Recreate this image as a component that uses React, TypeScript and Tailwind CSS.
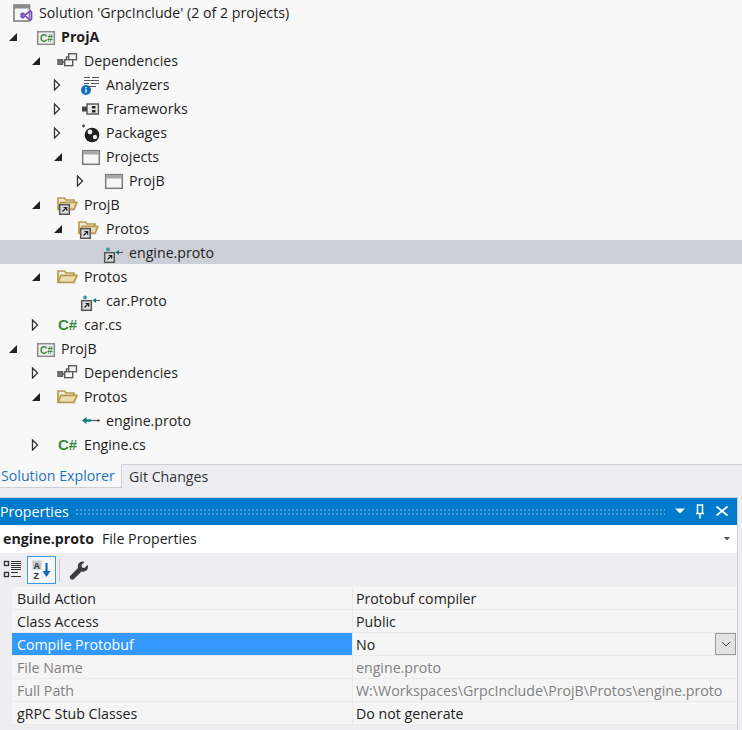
import React from 'react'

const font = { fontFamily: '"Open Sans", sans-serif' }

function Arrow({ open }: { open: boolean }) {
  return open ? (
    <svg width="10" height="10" viewBox="0 0 10 10" className="mt-px"><path d="M9 1v8H1z" fill="#222" /></svg>
  ) : (
    <svg width="8" height="12" viewBox="0 0 8 12" className="mt-px"><path d="M1.500 1l5 5-5 5z" fill="#fff" stroke="#333" strokeWidth="1.300" /></svg>
  )
}

function CsText({ x, y, size }: { x: number; y: number; size: number }) {
  return (
    <text x={x} y={y} fontSize={size} fontWeight="700" fill="#3a8a3e" fontFamily="Liberation Sans, sans-serif">C#</text>
  )
}

const SolutionIcon = () => (
  <svg width="24" height="24" viewBox="0 0 24 24">
    <rect x="1" y="5" width="15.500" height="16" fill="#f6f6f6" stroke="#808080" strokeWidth="1.600" />
    <rect x="1" y="5" width="15.500" height="3.500" fill="#8a8a8a" />
    <path d="M8 14.500l1.800-1.400 2.400 2 5-4.100 1.300.8v7.400l-1.300.8-5-4.100-2.400 2-1.800-1.400 1.800-1z" fill="none" stroke="#7a4bbd" strokeWidth="1.700" strokeLinejoin="round" />
  </svg>
)

const ProjectIcon = () => (
  <svg width="24" height="24" viewBox="0 0 24 24">
    <rect x="3.700" y="7.700" width="16.600" height="12.600" fill="#f0f0f0" stroke="#8c8c8c" strokeWidth="1.500" />
    <CsText x={6} y={18} size={10} />
  </svg>
)

const CsFileIcon = () => (
  <svg width="24" height="24" viewBox="0 0 24 24">
    <CsText x={1} y={18} size={15} />
  </svg>
)

const DependenciesIcon = () => (
  <svg width="24" height="24" viewBox="0 0 24 24" fill="none" stroke="#5c5c5c" strokeWidth="1.400">
    <rect x="11.700" y="5.700" width="7.800" height="6" fill="#f4f4f4" />
    <rect x="7.700" y="11.700" width="8" height="6" fill="#f4f4f4" />
    <rect x="1" y="11.700" width="4.500" height="4.600" fill="#777" />
    <path d="M5.500 14h2M11.700 9H9.500v2.700" />
  </svg>
)

const AnalyzersIcon = () => (
  <svg width="24" height="24" viewBox="0 0 24 24">
    <path d="M5 5.500h6M13 5.500h7M5 8.500h15M5 11.500h5M12 11.500h8M10 14.500h7" stroke="#555" strokeWidth="1.100" />
    <circle cx="7" cy="18" r="5" fill="#0e70c0" />
    <rect x="6.300" y="17" width="1.400" height="3.600" fill="#fff" />
    <rect x="6.300" y="15" width="1.400" height="1.300" fill="#fff" />
  </svg>
)

const FrameworksIcon = () => (
  <svg width="24" height="24" viewBox="0 0 24 24">
    <rect x="8" y="8" width="11.400" height="10" fill="#e8e8e8" stroke="#555" strokeWidth="1.400" />
    <path d="M3 10.500h5v5H3z" fill="#444" />
    <rect x="13" y="10" width="3.500" height="2.500" fill="#222" />
    <rect x="13" y="14" width="3.500" height="2.500" fill="#222" />
  </svg>
)

const PackagesIcon = () => (
  <svg width="24" height="24" viewBox="0 0 24 24">
    <circle cx="4.500" cy="6" r="1.400" fill="#444" />
    <circle cx="13" cy="15" r="7.300" fill="#1f1f1f" />
    <circle cx="11" cy="12" r="2.400" fill="#eee" />
    <circle cx="16" cy="17" r="2.200" fill="#eee" />
  </svg>
)

const WindowIcon = () => (
  <svg width="24" height="24" viewBox="0 0 24 24">
    <rect x="3.700" y="6.700" width="16.600" height="13.600" fill="#f7f7f7" stroke="#7c7c7c" strokeWidth="1.500" />
    <rect x="4" y="7" width="16" height="3.500" fill="#a8a8a8" />
  </svg>
)

const LinkBadge = () => (
  <>
    <rect x="2.700" y="12.700" width="9.600" height="9.600" fill="#dcdcdc" stroke="#555" strokeWidth="1.500" />
    <path d="M5.500 19.500l4-4M6.500 15.500h3.200v3.200" fill="none" stroke="#222" strokeWidth="1.200" />
  </>
)

const FolderIcon = ({ link, top = 6, className }: { link?: boolean; top?: number; className?: string }) => (
  <svg width="24" height="24" viewBox="0 0 24 24" className={className}>
    <g transform={`translate(0 ${top - 6})`}>
      <path d="M1 18.400V7h6.500l1.500 2h8v3" fill="#f3ead2" stroke="#b8994f" strokeWidth="1.700" />
      <path d="M1 18.400l3-7h16l-3 7z" fill="#ecdcae" stroke="#b8994f" strokeWidth="1.700" strokeLinejoin="round" />
    </g>
    {link && <LinkBadge />}
  </svg>
)

const ProtoLinkIcon = ({ className }: { className?: string }) => (
  <svg width="24" height="24" viewBox="0 0 24 24" className={className}>
    <circle cx="6" cy="9.500" r="1.900" fill="#3f9a9a" />
    <path d="M14 12.500h7" stroke="#555" strokeWidth="1.100" />
    <path d="M13.500 12.500l3.500-2.500v5z" fill="#137a7f" />
    <LinkBadge />
  </svg>
)

const ProtoIcon = () => (
  <svg width="24" height="24" viewBox="0 0 24 24">
    <path d="M6 12.500h14" stroke="#555" strokeWidth="1.200" />
    <path d="M3 12.500l4.500-3.700v7.400z" fill="#137a7f" />
    <path d="M7 12.500h5" stroke="#137a7f" strokeWidth="2.400" />
    <rect x="18.500" y="11.500" width="2" height="2" fill="#333" />
  </svg>
)

const indent = ['pl-[8px]', 'pl-[31px]', 'pl-[53px]', 'pl-[76px]']

type Node = { label: string; level: number; icon: React.ReactNode; open?: boolean; bold?: boolean; selected?: boolean }

const nodes: Node[] = [
  { label: 'ProjA', level: 0, icon: <ProjectIcon />, open: true, bold: true },
  { label: 'Dependencies', level: 1, icon: <DependenciesIcon />, open: true },
  { label: 'Analyzers', level: 2, icon: <AnalyzersIcon />, open: false },
  { label: 'Frameworks', level: 2, icon: <FrameworksIcon />, open: false },
  { label: 'Packages', level: 2, icon: <PackagesIcon />, open: false },
  { label: 'Projects', level: 2, icon: <WindowIcon />, open: true },
  { label: 'ProjB', level: 3, icon: <WindowIcon />, open: false },
  { label: 'ProjB', level: 1, icon: <FolderIcon link top={5} />, open: true },
  { label: 'Protos', level: 2, icon: <FolderIcon link top={5} className="-ml-[1px]" />, open: true },
  { label: 'engine.proto', level: 3, icon: <ProtoLinkIcon />, selected: true },
  { label: 'Protos', level: 1, icon: <FolderIcon />, open: true },
  { label: 'car.Proto', level: 2, icon: <ProtoLinkIcon /> },
  { label: 'car.cs', level: 1, icon: <CsFileIcon />, open: false },
  { label: 'ProjB', level: 0, icon: <ProjectIcon />, open: true },
  { label: 'Dependencies', level: 1, icon: <DependenciesIcon />, open: false },
  { label: 'Protos', level: 1, icon: <FolderIcon />, open: true },
  { label: 'engine.proto', level: 2, icon: <ProtoIcon /> },
  { label: 'Engine.cs', level: 1, icon: <CsFileIcon />, open: false },
]

function TreeRow({ node }: { node: Node }) {
  return (
    <div className={`flex h-6 items-center ${indent[node.level]} ${node.selected ? 'bg-[#ccced8]' : ''}`}>
      <div className="flex w-[26px] items-center">
        {node.open !== undefined && <Arrow open={node.open} />}
      </div>
      <div className="w-[27px] shrink-0">{node.icon}</div>
      <span className={node.bold ? 'pt-[2px] font-bold text-[#1e1e1e]' : 'pt-[2px] text-[#1e1e1e]'}>{node.label}</span>
    </div>
  )
}

const props = [
  { name: 'Build Action', value: 'Protobuf compiler' },
  { name: 'Class Access', value: 'Public' },
  { name: 'Compile Protobuf', value: 'No', active: true },
  { name: 'File Name', value: 'engine.proto', muted: true },
  { name: 'Full Path', value: 'W:\\Workspaces\\GrpcInclude\\ProjB\\Protos\\engine.proto', muted: true },
  { name: 'gRPC Stub Classes', value: 'Do not generate' },
]

export default function App() {
  return (
    <div className="flex h-[730px] w-[742px] flex-col overflow-hidden bg-[#eeeef2] text-[14.2px]" style={font}>
      {/* Solution explorer */}
      <div className="h-[464px] bg-[#f8f8f8]">
        <div className="flex h-6 items-center pl-[13px]">
          <div className="w-[26px] shrink-0"><SolutionIcon /></div>
          <span className="pt-[2px] text-[#1e1e1e]">Solution 'GrpcInclude' (2 of 2 projects)</span>
        </div>
        {nodes.map((node, i) => (
          <TreeRow key={i} node={node} />
        ))}
      </div>

      {/* Tabs */}
      <div className="flex h-6 items-stretch">
        <div className="flex w-[122px] items-center border-r border-b border-[#cfcfd6] bg-[#f8f8f8] pl-px pt-px text-[#1e74b8]">Solution Explorer</div>
        <div className="flex flex-1 items-center border-t border-[#cfcfd6] pl-[7px] text-[#333]">Git Changes</div>
      </div>

      {/* Properties panel */}
      <div className="mt-[9px] flex-1 w-[738px] border-t border-r border-[#cfcfd6]">
        <div className="flex h-[27px] items-center bg-[#007acc] text-white">
          <span>Properties</span>
          <div className="mr-[6px] ml-[6px] h-2 flex-1 bg-[radial-gradient(circle,#4d9fd8_1px,transparent_1px)] bg-[length:4px_4px]" />
          <svg width="60" height="16" viewBox="0 0 60 16" className="mr-[6px] shrink-0">
            <path d="M4 4.500h10l-5 5z" fill="#fff" />
            <path d="M26.500 1h5v8.500h-5zM29 9.500v5M25 9.500h8" fill="none" stroke="#fff" strokeWidth="1.500" />
            <path d="M45.500 2.500l11 9M56.500 2.500l-11 9" stroke="#fff" strokeWidth="1.800" />
          </svg>
        </div>
        <div className="flex h-7 items-center bg-white pl-[3px] text-[#1e1e1e]">
          <span className="font-bold">engine.proto</span>
          <span className="ml-2 flex-1">File Properties</span>
          <svg width="6" height="4" viewBox="0 0 6 4" className="mr-[7px]"><path d="M0 0h6L3 3.500z" fill="#555" /></svg>
        </div>
        <div className="flex h-[34px] items-center pl-[3px]">
          <svg width="20" height="20" viewBox="0 0 20 20" className="mr-[4px] shrink-0">
            <rect x="1.500" y="1.500" width="4" height="4" fill="#fff" stroke="#333" strokeWidth="1.400" />
            <rect x="1.500" y="12.500" width="4" height="4" fill="#fff" stroke="#333" strokeWidth="1.400" />
            <path d="M8 1.500h10M8 3.500h10M8 5.500h10M8 7.500h10M8 9.500h10M8 12.500h7M8 16.500h10" stroke="#333" strokeWidth="1" />
          </svg>
          <div className="flex h-7 w-[29px] items-center justify-center border border-[#3399ff] bg-[#f7f7f9]">
            <svg width="20" height="20" viewBox="0 0 20 20">
              <rect x="0.500" y="0.500" width="9" height="9" fill="#c8c8c8" />
              <text x="1.500" y="8.500" fontSize="9" fontWeight="700" fill="#333" fontFamily="Liberation Sans, sans-serif">A</text>
              <text x="1.500" y="18.500" fontSize="9" fontWeight="700" fill="#333" fontFamily="Liberation Sans, sans-serif">Z</text>
              <path d="M14.500 3v9" stroke="#1468b8" strokeWidth="2.200" />
              <path d="M10.500 11h8l-4 6z" fill="#1468b8" />
            </svg>
          </div>
          <div className="mx-[3px] h-[22px] w-px bg-[#c4c4cc]" />
          <svg width="20" height="20" viewBox="0 0 20 20" className="ml-[6px]">
            <path d="M1.500 15.500l7.500-7.500c-1-3.500 1.500-7 5.500-6.500l1 .5-3 3 .5 2.500 2.500.5 3-3 .5 1c.5 4-3 6.500-6.500 5.500l-7.500 7.500c-1 1-2.500 1-3.500 0s-1-2.500 0-3.500z" fill="#3c3c3c" />
          </svg>
        </div>
        <div className="ml-3 bg-[#f5f5f5]">
          {props.map((p) => (
            <div key={p.name} className="flex h-[23px] border-b border-[#eaeaea]">
              <div className={`flex w-[341px] items-center border-r border-[#eaeaea] pl-[5px] pt-[2px] ${p.active ? 'bg-[#3399ff] text-white' : p.muted ? 'text-[#808080]' : 'text-[#1e1e1e]'}`}>{p.name}</div>
              <div className={`flex flex-1 items-center pl-[3px] ${p.muted ? 'text-[#808080]' : 'text-[#1e1e1e]'}`}>
                <span className="flex-1 pt-[2px]">{p.value}</span>
                {p.active && (
                  <div className="mr-px flex h-[22px] w-[21px] items-center justify-center border border-[#999] bg-[#e3e3e3]">
                    <svg width="10" height="6" viewBox="0 0 10 6"><path d="M1 1l4 4 4-4" fill="none" stroke="#444" /></svg>
                  </div>
                )}
              </div>
            </div>
          ))}
        </div>
      </div>
    </div>
  )
}
